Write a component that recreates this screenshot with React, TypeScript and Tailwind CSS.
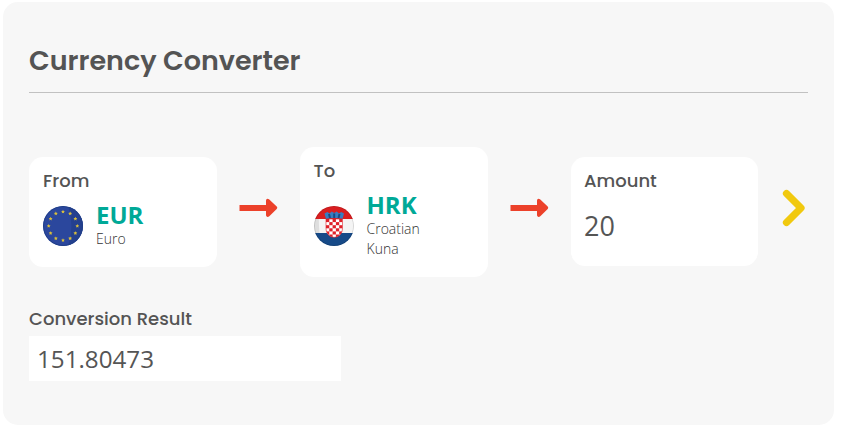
import React from "react";

const labelFont = "font-['Poppins','Inter',sans-serif] font-medium text-[#545454]";

function star(cx: number, cy: number, r: number) {
  return Array.from({ length: 10 }, (_, i) => {
    const a = -Math.PI / 2 + (i * Math.PI) / 5;
    const q = i % 2 ? r * 0.5 : r;
    return `${cx + q * Math.cos(a)},${cy + q * Math.sin(a)}`;
  }).join(" ");
}

function EuroFlag() {
  return (
    <svg width="40" height="40" viewBox="0 0 40 40" className="mt-[2px] shrink-0">
      <clipPath id="eu"><circle cx="20" cy="20" r="20" /></clipPath>
      <g clipPath="url(#eu)">
        <rect width="40" height="40" fill="#2b479d" />
        <path d="M25 0Q32 20 25 40H40V0Z" fill="#24408f" />
        <circle cx="20" cy="20" r="19.5" fill="none" stroke="#213f86" strokeWidth="1" />
      </g>
      {Array.from({ length: 12 }, (_, i) => {
        const a = (i * Math.PI) / 6;
        return <polygon key={i} points={star(20 + 14.3 * Math.sin(a), 20 - 14.3 * Math.cos(a), 2)} fill="#d9bf3c" />;
      })}
    </svg>
  );
}

function CroatiaFlag() {
  const cells = [];
  for (let r = 0; r < 6; r++)
    for (let c = 0; c < 5; c++)
      if ((r + c) % 2 === 0)
        cells.push(<rect key={`${r}-${c}`} x={12 + c * 3.3} y={13 + r * 3.1} width="3.3" height="3.1" fill="#df2029" />);
  return (
    <svg width="40" height="40" viewBox="0 0 40 40" className="mt-[2px] shrink-0">
      <clipPath id="hr"><circle cx="20" cy="20" r="20" /></clipPath>
      <clipPath id="shield"><path d="M12 13H28.5V22C28.5 27.5 25 31.3 20.2 31.3S12 27.5 12 22Z" /></clipPath>
      <g clipPath="url(#hr)">
        <rect width="40" height="40" fill="#f4f4f4" />
        <path d="M0 0H5Q4 20 7 40H0Z" fill="#dedede" />
        <rect width="40" height="13" fill="#d91e20" />
        <rect y="27" width="40" height="13" fill="#164a88" />
        <circle cx="20" cy="20" r="19.6" fill="none" stroke="#000000" strokeOpacity=".13" />
      </g>
      <path d="M10.5 7.5L13.3 6L15.5 7.5L17.8 5.5L20.2 7L22.7 5.5L25 7.5L27.2 6L30 7.5L28.5 13Q20.2 11 12 13Z" fill="#387dc1" />
      <path d="M15 8L16 12M20.2 7.5V12M25.5 8L24.5 12" stroke="#174c86" strokeWidth="2" />
      <g clipPath="url(#shield)">
        <rect x="12" y="12" width="17" height="20" fill="#fff" />
        {cells}
      </g>
      <path d="M12 13H28.5V22C28.5 27.5 25 31.3 20.2 31.3S12 27.5 12 22Z" fill="none" stroke="#df2029" strokeWidth=".6" />
    </svg>
  );
}

function Arrow() {
  return (
    <div className="flex h-[130px] w-[83px] shrink-0 items-center pl-[22px]">
      <svg width="39" height="20" viewBox="0 0 39 20" className="mt-[-8px]">
        <path d="M.5 7H27V3C27 .8 28.8 .2 30.3 1.6L37.7 8.6Q38.8 9.8 37.7 11L30.3 18.2C28.8 19.6 27 19 27 16.8V13H.5Z" fill="#ec412a" />
      </svg>
    </div>
  );
}

export default function App() {
  return (
    <main className="h-[434px] w-full bg-white pl-[3px] pt-[2px] font-['Open_Sans',sans-serif] text-[#555]">
      <section className="flex h-[423px] w-[831px] flex-col rounded-[15px] bg-[#f7f7f7] pl-[26px] pr-[26px] pt-[38px]">
        <h1 className="h-[53px] w-[779px] border-b border-[#c1c1c1] font-['Poppins','Inter',sans-serif] text-[27px] font-semibold leading-[41px] text-[#545454]">
          Currency Converter
        </h1>
        <div className="mt-[54px] flex h-[130px] items-center">
          <div className="h-[110px] w-[188px] shrink-0 rounded-[14px] bg-white pl-[14px] pt-[12px]">
            <div className={`${labelFont} text-[18px] leading-6`}>From</div>
            <div className="mt-[8px] flex items-center gap-[13px]">
              <EuroFlag />
              <div>
                <div className="text-2xl font-bold leading-[28px] text-[#00a997]">EUR</div>
                <div className="text-sm font-light leading-5 text-[#333]">Euro</div>
              </div>
            </div>
          </div>
          <Arrow />
          <div className="h-[130px] w-[188px] shrink-0 rounded-[14px] bg-white pl-[13.5px] pt-[12px]">
            <div className={`${labelFont} text-[18px] leading-6`}>To</div>
            <div className="mt-[8px] flex items-center gap-[13px]">
              <CroatiaFlag />
              <div>
                <div className="text-2xl font-bold leading-[28px] text-[#00a997]">HRK</div>
                <div className="text-sm font-light leading-5 text-[#333]">Croatian<br />Kuna</div>
              </div>
            </div>
          </div>
          <Arrow />
          <div className="mb-[1px] h-[109px] w-[187px] shrink-0 rounded-[14px] bg-white pl-[13px] pt-[12px]">
            <div className={`${labelFont} text-[18px] leading-6`}>Amount</div>
            <div className="mt-[15px] text-[27px] leading-9">20</div>
          </div>
          <svg width="24" height="38" viewBox="0 0 24 38" className="ml-[24px] mt-[-8px] shrink-0">
            <path d="M4.5 4.5L19 19L4.5 33.5" fill="none" stroke="#f1c90f" strokeWidth="7.2" strokeLinecap="round" strokeLinejoin="round" />
          </svg>
        </div>
        <div className={`${labelFont} mt-[30px] text-[18px] leading-6`}>Conversion Result</div>
        <div className="mt-[5px] h-[45px] w-[312px] bg-white pl-2 text-[24.2px] leading-[45px]">151.80473</div>
      </section>
    </main>
  );
}
